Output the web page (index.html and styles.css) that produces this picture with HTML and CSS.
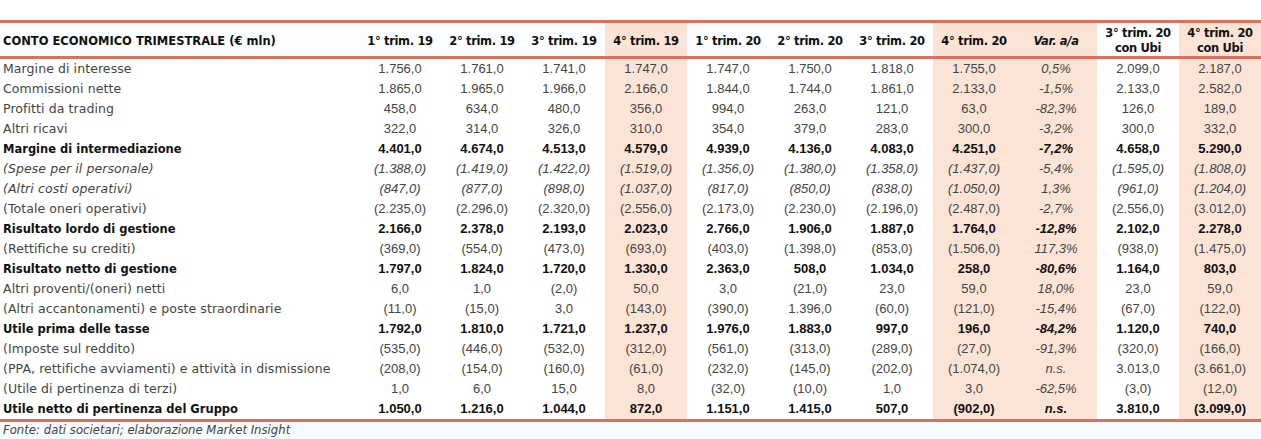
FILE: index.html
```html
<!DOCTYPE html>
<html lang="it">
<head>
<meta charset="utf-8">
<title>Conto economico trimestrale</title>
<link rel="stylesheet" href="styles.css">
</head>
<body>
<div class="page">
<table class="ce">
<colgroup>
<col class="c-label">
<col class="c-num"><col class="c-num"><col class="c-num"><col class="c-num">
<col class="c-num"><col class="c-num"><col class="c-num"><col class="c-num">
<col class="c-num"><col class="c-num"><col class="c-num">
</colgroup>
<thead>
<tr>
<th class="label">CONTO ECONOMICO TRIMESTRALE (€ mln)</th>
<th>1° trim. 19</th>
<th>2° trim. 19</th>
<th>3° trim. 19</th>
<th class="sh">4° trim. 19</th>
<th>1° trim. 20</th>
<th>2° trim. 20</th>
<th>3° trim. 20</th>
<th class="sh">4° trim. 20</th>
<th class="sh var">Var. a/a</th>
<th>3° trim. 20<br>con Ubi</th>
<th class="sh">4° trim. 20<br>con Ubi</th>
</tr>
</thead>
<tbody>
<tr><td class="label">Margine di interesse</td><td>1.756,0</td><td>1.761,0</td><td>1.741,0</td><td class="sh">1.747,0</td><td>1.747,0</td><td>1.750,0</td><td>1.818,0</td><td class="sh">1.755,0</td><td class="sh var">0,5%</td><td>2.099,0</td><td class="sh">2.187,0</td></tr>
<tr><td class="label">Commissioni nette</td><td>1.865,0</td><td>1.965,0</td><td>1.966,0</td><td class="sh">2.166,0</td><td>1.844,0</td><td>1.744,0</td><td>1.861,0</td><td class="sh">2.133,0</td><td class="sh var">-1,5%</td><td>2.133,0</td><td class="sh">2.582,0</td></tr>
<tr><td class="label">Profitti da trading</td><td>458,0</td><td>634,0</td><td>480,0</td><td class="sh">356,0</td><td>994,0</td><td>263,0</td><td>121,0</td><td class="sh">63,0</td><td class="sh var">-82,3%</td><td>126,0</td><td class="sh">189,0</td></tr>
<tr><td class="label">Altri ricavi</td><td>322,0</td><td>314,0</td><td>326,0</td><td class="sh">310,0</td><td>354,0</td><td>379,0</td><td>283,0</td><td class="sh">300,0</td><td class="sh var">-3,2%</td><td>300,0</td><td class="sh">332,0</td></tr>
<tr class="b"><td class="label">Margine di intermediazione</td><td>4.401,0</td><td>4.674,0</td><td>4.513,0</td><td class="sh">4.579,0</td><td>4.939,0</td><td>4.136,0</td><td>4.083,0</td><td class="sh">4.251,0</td><td class="sh var">-7,2%</td><td>4.658,0</td><td class="sh">5.290,0</td></tr>
<tr class="i"><td class="label">(Spese per il personale)</td><td>(1.388,0)</td><td>(1.419,0)</td><td>(1.422,0)</td><td class="sh">(1.519,0)</td><td>(1.356,0)</td><td>(1.380,0)</td><td>(1.358,0)</td><td class="sh">(1.437,0)</td><td class="sh var">-5,4%</td><td>(1.595,0)</td><td class="sh">(1.808,0)</td></tr>
<tr class="i"><td class="label">(Altri costi operativi)</td><td>(847,0)</td><td>(877,0)</td><td>(898,0)</td><td class="sh">(1.037,0)</td><td>(817,0)</td><td>(850,0)</td><td>(838,0)</td><td class="sh">(1.050,0)</td><td class="sh var">1,3%</td><td>(961,0)</td><td class="sh">(1.204,0)</td></tr>
<tr><td class="label">(Totale oneri operativi)</td><td>(2.235,0)</td><td>(2.296,0)</td><td>(2.320,0)</td><td class="sh">(2.556,0)</td><td>(2.173,0)</td><td>(2.230,0)</td><td>(2.196,0)</td><td class="sh">(2.487,0)</td><td class="sh var">-2,7%</td><td>(2.556,0)</td><td class="sh">(3.012,0)</td></tr>
<tr class="b"><td class="label">Risultato lordo di gestione</td><td>2.166,0</td><td>2.378,0</td><td>2.193,0</td><td class="sh">2.023,0</td><td>2.766,0</td><td>1.906,0</td><td>1.887,0</td><td class="sh">1.764,0</td><td class="sh var">-12,8%</td><td>2.102,0</td><td class="sh">2.278,0</td></tr>
<tr><td class="label">(Rettifiche su crediti)</td><td>(369,0)</td><td>(554,0)</td><td>(473,0)</td><td class="sh">(693,0)</td><td>(403,0)</td><td>(1.398,0)</td><td>(853,0)</td><td class="sh">(1.506,0)</td><td class="sh var">117,3%</td><td>(938,0)</td><td class="sh">(1.475,0)</td></tr>
<tr class="b"><td class="label">Risultato netto di gestione</td><td>1.797,0</td><td>1.824,0</td><td>1.720,0</td><td class="sh">1.330,0</td><td>2.363,0</td><td>508,0</td><td>1.034,0</td><td class="sh">258,0</td><td class="sh var">-80,6%</td><td>1.164,0</td><td class="sh">803,0</td></tr>
<tr><td class="label">Altri proventi/(oneri) netti</td><td>6,0</td><td>1,0</td><td>(2,0)</td><td class="sh">50,0</td><td>3,0</td><td>(21,0)</td><td>23,0</td><td class="sh">59,0</td><td class="sh var">18,0%</td><td>23,0</td><td class="sh">59,0</td></tr>
<tr><td class="label">(Altri accantonamenti) e poste straordinarie</td><td>(11,0)</td><td>(15,0)</td><td>3,0</td><td class="sh">(143,0)</td><td>(390,0)</td><td>1.396,0</td><td>(60,0)</td><td class="sh">(121,0)</td><td class="sh var">-15,4%</td><td>(67,0)</td><td class="sh">(122,0)</td></tr>
<tr class="b"><td class="label">Utile prima delle tasse</td><td>1.792,0</td><td>1.810,0</td><td>1.721,0</td><td class="sh">1.237,0</td><td>1.976,0</td><td>1.883,0</td><td>997,0</td><td class="sh">196,0</td><td class="sh var">-84,2%</td><td>1.120,0</td><td class="sh">740,0</td></tr>
<tr><td class="label">(Imposte sul reddito)</td><td>(535,0)</td><td>(446,0)</td><td>(532,0)</td><td class="sh">(312,0)</td><td>(561,0)</td><td>(313,0)</td><td>(289,0)</td><td class="sh">(27,0)</td><td class="sh var">-91,3%</td><td>(320,0)</td><td class="sh">(166,0)</td></tr>
<tr><td class="label">(PPA, rettifiche avviamenti) e attività in dismissione</td><td>(208,0)</td><td>(154,0)</td><td>(160,0)</td><td class="sh">(61,0)</td><td>(232,0)</td><td>(145,0)</td><td>(202,0)</td><td class="sh">(1.074,0)</td><td class="sh var">n.s.</td><td>3.013,0</td><td class="sh">(3.661,0)</td></tr>
<tr><td class="label">(Utile di pertinenza di terzi)</td><td>1,0</td><td>6,0</td><td>15,0</td><td class="sh">8,0</td><td>(32,0)</td><td>(10,0)</td><td>1,0</td><td class="sh">3,0</td><td class="sh var">-62,5%</td><td>(3,0)</td><td class="sh">(12,0)</td></tr>
<tr class="b last"><td class="label">Utile netto di pertinenza del Gruppo</td><td>1.050,0</td><td>1.216,0</td><td>1.044,0</td><td class="sh">872,0</td><td>1.151,0</td><td>1.415,0</td><td>507,0</td><td class="sh">(902,0)</td><td class="sh var">n.s.</td><td>3.810,0</td><td class="sh">(3.099,0)</td></tr>
</tbody>
</table>
<p class="source">Fonte: dati societari; elaborazione Market Insight</p>
</div>
</body>
</html>
```

FILE: styles.css
```css
html, body {
  margin: 0;
  padding: 0;
  background: #ffffff;
}

.page {
  width: 1261px;
  padding-top: 20px;
  font-family: "DejaVu Sans", "Liberation Sans", sans-serif;
  color: #444444;
}

.ce {
  width: 1261px;
  border-collapse: collapse;
  table-layout: fixed;
}

.c-label { width: 359px; }
.c-num { width: 82px; }

.ce th {
  height: 30px;
  padding: 3px 0 0 0;
  font-family: "DejaVu Sans", sans-serif;
  font-size: 11.5px;
  letter-spacing: -0.35px;
  font-weight: bold;
  color: #111111;
  text-align: center;
  vertical-align: middle;
  line-height: 15px;
  border-top: 3px solid #df6e5d;
  border-bottom: 3px solid #df6e5d;
  background: #fbfdfe;
}

.ce th.label {
  text-align: left;
  padding-left: 3px;
  letter-spacing: 0;
}

.ce td {
  height: 20px;
  padding: 0;
  font-family: "Liberation Sans", Arial, sans-serif;
  font-size: 13px;
  text-align: center;
  vertical-align: middle;
  white-space: nowrap;
  line-height: 20px;
}

.ce td.label {
  font-family: "DejaVu Sans", sans-serif;
  font-size: 12.5px;
  letter-spacing: 0.08px;
  text-align: left;
  padding-left: 3px;
}

.ce .sh,
.ce th.sh {
  background: #fbe4d5;
}

.ce .var {
  font-style: italic;
}

.ce tr.b td {
  font-weight: bold;
  color: #111111;
}

.ce tr.b td.label {
  font-size: 11.5px;
  letter-spacing: 0;
}

.ce tr.i td {
  font-style: italic;
}

.ce tr.last td {
  border-bottom: 3px solid #df6e5d;
}

.source {
  margin: 0;
  padding: 0 0 0 3px;
  font-style: italic;
  font-size: 11.7px;
  color: #444444;
  background: #f6fbfd;
  height: 18px;
  line-height: 16px;
}
```
